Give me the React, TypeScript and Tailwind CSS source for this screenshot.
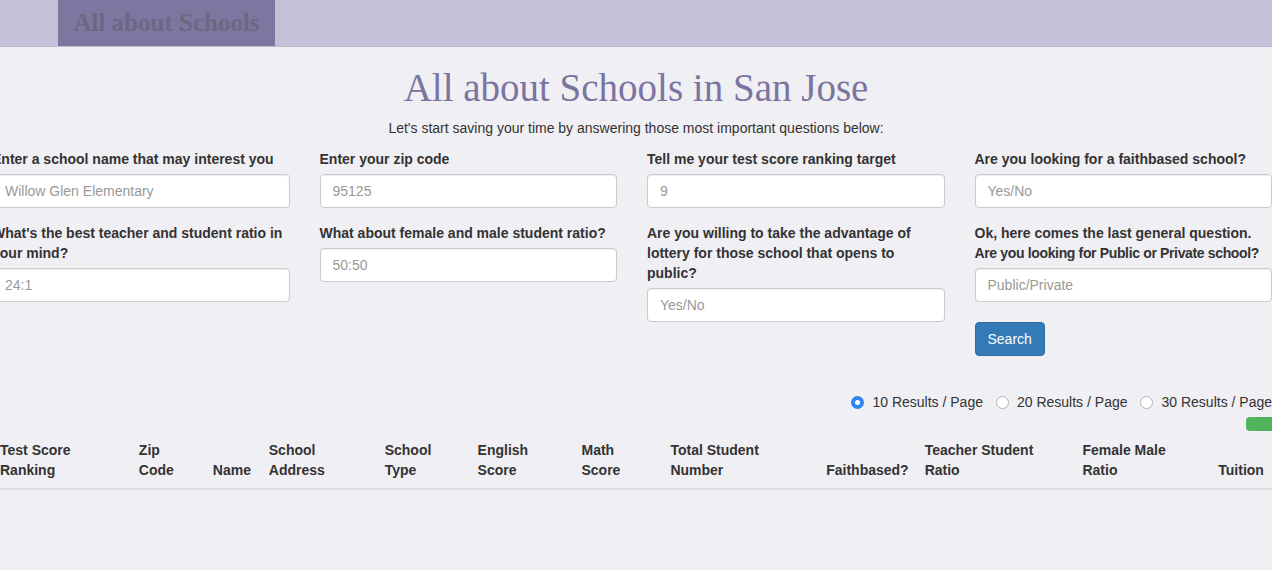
import React, { useState } from 'react';

const sans = { fontFamily: '"Liberation Sans", Arial, sans-serif' };

interface FieldProps {
  label: React.ReactNode;
  placeholder: string;
}

const Field: React.FC<FieldProps> = ({ label, placeholder }) => (
  <div className="mb-[15px]">
    <label className="block text-[14px] leading-[20px] font-bold text-[#333] mb-[5px]">{label}</label>
    <input
      type="text"
      placeholder={placeholder}
      className="block w-full h-[34px] px-3 text-[14px] bg-white border border-[#ccc] rounded-[4px] shadow-[inset_0_1px_1px_rgba(0,0,0,0.075)] placeholder:text-[#999] outline-none"
    />
  </div>
);

const columns: { top: string; bottom: string; w: string }[] = [
  { top: 'Test Score', bottom: 'Ranking', w: 'w-[139px]' },
  { top: 'Zip', bottom: 'Code', w: 'w-[74px]' },
  { top: '', bottom: 'Name', w: 'w-[56px]' },
  { top: 'School', bottom: 'Address', w: 'w-[116px]' },
  { top: 'School', bottom: 'Type', w: 'w-[93px]' },
  { top: 'English', bottom: 'Score', w: 'w-[104px]' },
  { top: 'Math', bottom: 'Score', w: 'w-[89px]' },
  { top: 'Total Student', bottom: 'Number', w: 'w-[156px]' },
  { top: '', bottom: 'Faithbased?', w: 'w-[98px]' },
  { top: 'Teacher Student', bottom: 'Ratio', w: 'w-[158px]' },
  { top: 'Female Male', bottom: 'Ratio', w: 'w-[136px]' },
  { top: '', bottom: 'Tuition', w: 'w-[61px]' },
];

export default function App() {
  const [perPage, setPerPage] = useState(10);

  return (
    <div className="min-h-[570px] w-[1272px] overflow-hidden bg-[#f0eff4]" style={sans}>
      {/* Navbar */}
      <nav className="h-[47px] bg-[#c5c0d8] border-b border-[#bdb8d2] pl-[58px] flex">
        <div className="w-[217px] h-full bg-[#7b77a0] flex items-center justify-center">
          <span
            className="text-[25px] font-bold text-[#6b6882]"
            style={{ fontFamily: '"Liberation Serif", Georgia, serif' }}
          >
            All about Schools
          </span>
        </div>
      </nav>

      {/* Heading */}
      <div className="text-center pt-[18px]">
        <h1
          className="text-[39px] leading-[46px] text-[#7a74a0]"
          style={{ fontFamily: '"Liberation Serif", Georgia, serif' }}
        >
          All about Schools in San Jose
        </h1>
        <p className="mt-[7px] text-[14px] leading-[20px] text-[#333]">
          Let's start saving your time by answering those most important questions below:
        </p>
      </div>

      {/* Form grid */}
      <div className="ml-[-23px] w-[1310px] mt-[11px] flex">
        <div className="w-[327.5px] px-[15px]">
          <Field label="Enter a school name that may interest you" placeholder="Willow Glen Elementary" />
          <Field label="What's the best teacher and student ratio in your mind?" placeholder="24:1" />
        </div>
        <div className="w-[327.5px] px-[15px]">
          <Field label="Enter your zip code" placeholder="95125" />
          <Field label="What about female and male student ratio?" placeholder="50:50" />
        </div>
        <div className="w-[327.5px] px-[15px]">
          <Field label="Tell me your test score ranking target" placeholder="9" />
          <Field
            label="Are you willing to take the advantage of lottery for those school that opens to public?"
            placeholder="Yes/No"
          />
        </div>
        <div className="w-[327.5px] px-[15px]">
          <Field label="Are you looking for a faithbased school?" placeholder="Yes/No" />
          <Field
            label={
              <>
                Ok, here comes the last general question.
                <br />
                <span className="whitespace-nowrap tracking-[-0.35px]">
                  Are you looking for Public or Private school?
                </span>
              </>
            }
            placeholder="Public/Private"
          />
          <button className="mt-[5px] h-[34px] px-3 text-[14px] text-white bg-[#337ab7] border border-[#2e6da4] rounded-[4px]">
            Search
          </button>
        </div>
      </div>

      {/* Results per page */}
      <div className="mt-[36px] flex justify-end items-center text-[14px] leading-[20px] text-[#333]">
        {[10, 20, 30].map((n) => (
          <label key={n} className="flex items-center ml-[13px] cursor-pointer">
            <span
              className={
                perPage === n
                  ? 'w-[13px] h-[13px] rounded-full bg-[#2f86ef] flex items-center justify-center mr-[8px]'
                  : 'w-[13px] h-[13px] rounded-full bg-white border border-[#b3b3b3] mr-[8px]'
              }
              onClick={() => setPerPage(n)}
            >
              {perPage === n && <span className="w-[5px] h-[5px] rounded-full bg-white" />}
            </span>
            {n} Results / Page
          </label>
        ))}
      </div>
      <div className="flex justify-end mt-[5px]">
        <button className="w-[26px] h-[14px] bg-[#4fb45b] rounded-l-[4px]" />
      </div>

      {/* Table */}
      <table className="mt-[1px] ml-[-8px] w-[1280px] border-collapse text-[14px] leading-[20px] text-[#333]">
        <thead>
          <tr className="border-b-2 border-[#ddd]">
            {columns.map((c) => (
              <th key={c.bottom + c.top} className={`${c.w} p-[8px] text-left align-bottom font-bold`}>
                {c.top && (
                  <>
                    {c.top}
                    <br />
                  </>
                )}
                {c.bottom}
              </th>
            ))}
          </tr>
        </thead>
      </table>
    </div>
  );
}
